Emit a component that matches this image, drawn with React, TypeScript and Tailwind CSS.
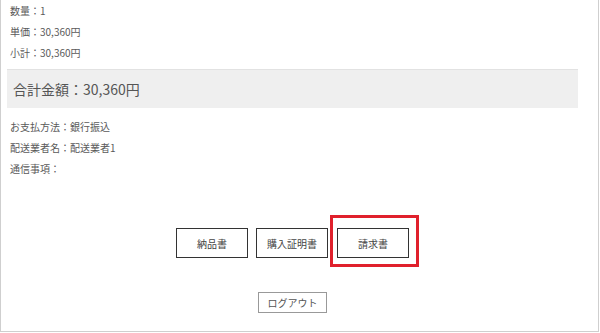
import React from 'react';

const font = { fontFamily: '"Noto Sans CJK JP", "Noto Sans", sans-serif' };

function InfoLine({ children }: { children: React.ReactNode }) {
  return <p className="h-[21px] leading-[21px] text-[10px] text-[#5a5a5a]">{children}</p>;
}

export default function App() {
  return (
    <div style={font} className="w-[599px] h-[332px] bg-white border-l border-r border-b border-[#cfcfcf]">
      <div className="w-[571px] ml-[6px]">
        {/* order item */}
        <div className="pl-[3px]">
          <InfoLine>数量：1</InfoLine>
          <InfoLine>単価：30,360円</InfoLine>
          <InfoLine>小計：30,360円</InfoLine>
        </div>

        {/* total */}
        <div className="mt-[6px] h-[39px] flex items-center px-[6px] bg-[#efefef] border-t border-[#e2e2e2] text-[14px] text-[#555]">
          合計金額：30,360円
        </div>

        {/* delivery info */}
        <div className="mt-[8px] pl-[3px]">
          <InfoLine>お支払方法：銀行振込</InfoLine>
          <InfoLine>配送業者名：配送業者1</InfoLine>
          <InfoLine>通信事項：</InfoLine>
        </div>

        {/* documents */}
        <div className="mt-[49px] flex justify-center gap-[8px]">
          <button className="w-[72px] h-[30px] border border-[#333] bg-white text-[10px] text-[#444]">納品書</button>
          <button className="w-[72px] h-[30px] border border-[#333] bg-white text-[10px] text-[#444]">購入証明書</button>
          <div className="relative ml-[1px]">
            <button className="w-[72px] h-[30px] border border-[#333] bg-white text-[10px] text-[#444]">請求書</button>
            <div className="absolute left-[-7px] top-[-13px] w-[89px] h-[52px] border-[3px] border-[#e0202c] pointer-events-none" />
          </div>
        </div>

        <div className="mt-[34px] flex justify-center">
          <button className="w-[69px] h-[21px] border border-[#999] bg-white text-[10px] text-[#555]">ログアウト</button>
        </div>
      </div>
    </div>
  );
}
